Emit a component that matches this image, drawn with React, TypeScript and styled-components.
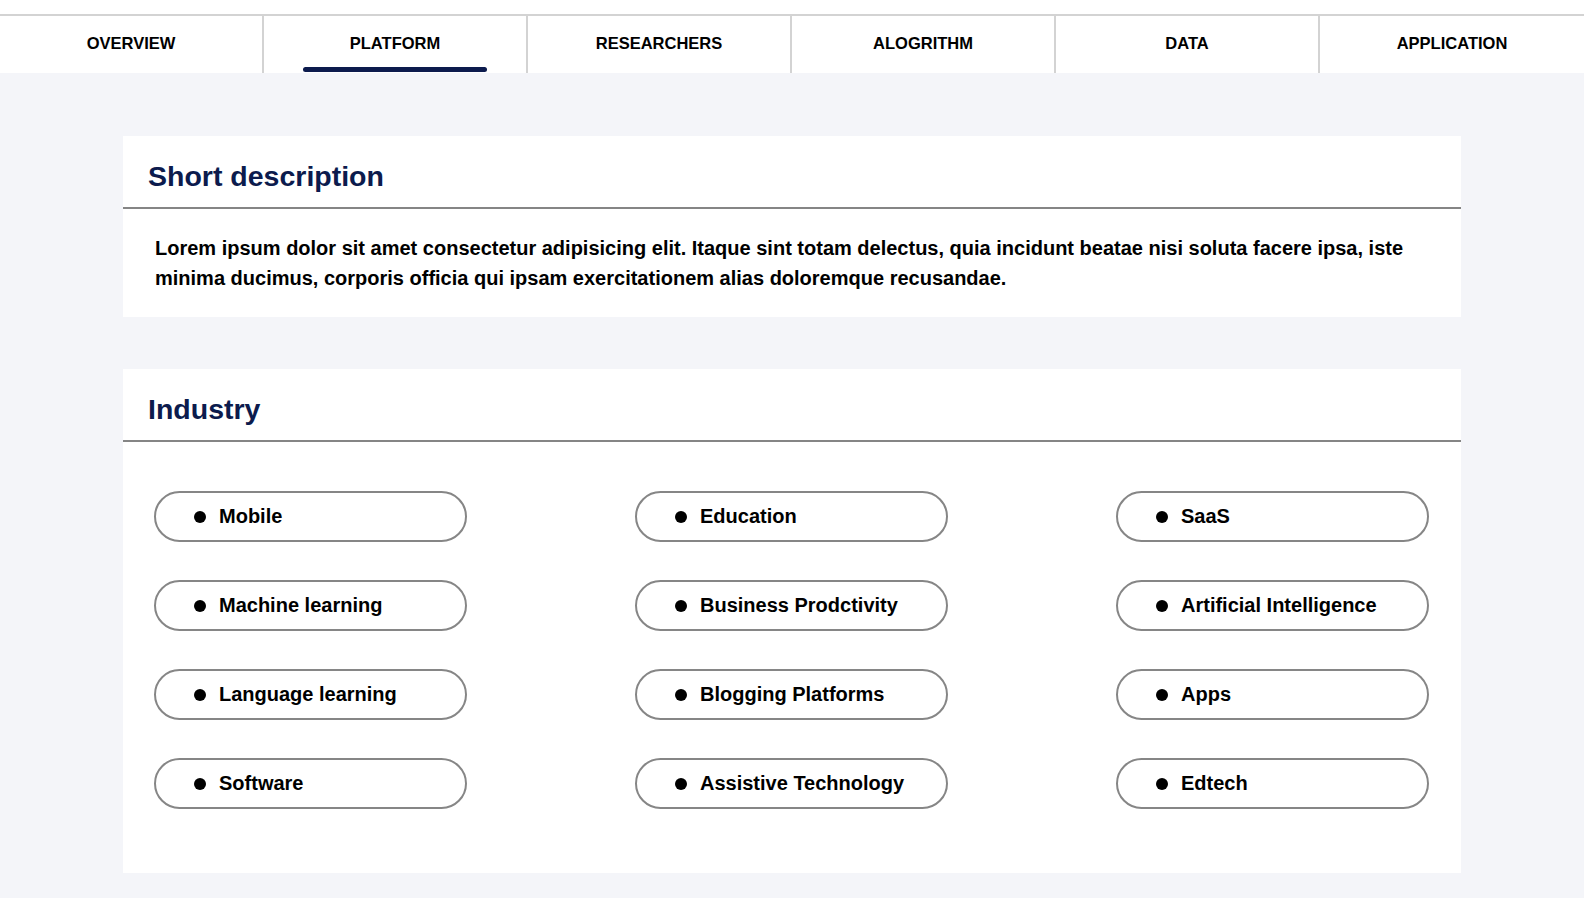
import React from "react";
import styled, { createGlobalStyle } from "styled-components";

const GlobalStyle = createGlobalStyle`
  body {
    margin: 0;
    background: #f4f5f9;
    font-family: "Liberation Sans", Arial, sans-serif;
    color: #000;
  }
`;

const tabs = ["Overview", "Platform", "Researchers", "Alogrithm", "Data", "Application"];

const industries = [
  "Mobile",
  "Education",
  "SaaS",
  "Machine learning",
  "Business Prodctivity",
  "Artificial Intelligence",
  "Language learning",
  "Blogging Platforms",
  "Apps",
  "Software",
  "Assistive Technology",
  "Edtech"
];

const Header = styled.header`
  background: #fff;
  padding-top: 14px;
`;

const TabBar = styled.nav`
  display: grid;
  grid-template-columns: repeat(6, 1fr);
  border-top: 2px solid #d3d3d3;
`;

const Tab = styled.div<{ $active?: boolean }>`
  position: relative;
  height: 57px;
  display: flex;
  align-items: center;
  justify-content: center;
  padding-bottom: 2px;
  box-sizing: border-box;
  border-right: 2px solid #d3d3d3;
  font-size: 16.5px;
  font-weight: 700;
  text-transform: uppercase;
  cursor: pointer;

  &:last-child {
    border-right: none;
  }

  &::after {
    content: "";
    display: ${(p) => (p.$active ? "block" : "none")};
    position: absolute;
    bottom: 1px;
    left: 50%;
    transform: translateX(-50%);
    width: 184px;
    height: 5px;
    border-radius: 3px;
    background: #0c1b4d;
  }
`;

const Main = styled.main`
  display: flex;
  flex-direction: column;
  gap: 52px;
  padding: 63px 0 24px;
`;

const Card = styled.section`
  width: 1338px;
  margin: 0 auto;
  background: #fff;
`;

const CardTitle = styled.h2`
  margin: 0;
  padding: 24px 25px 14px;
  font-size: 28.5px;
  font-weight: 700;
  color: #0c1b4d;
  border-bottom: 2px solid #858585;
`;

const Description = styled.p`
  margin: 0;
  padding: 24px 32px 24px;
  font-size: 20px;
  font-weight: 700;
  line-height: 30px;
`;

const PillGrid = styled.div`
  display: grid;
  grid-template-columns: repeat(3, 313px);
  justify-content: space-between;
  row-gap: 38px;
  padding: 49px 32px 64px 31px;
`;

const Pill = styled.div`
  height: 51px;
  box-sizing: border-box;
  border: 2px solid #868686;
  border-radius: 26px;
  display: flex;
  align-items: center;
  padding-left: 38px;
  font-size: 20px;
  font-weight: 700;
`;

const Dot = styled.span`
  width: 12px;
  height: 12px;
  border-radius: 50%;
  background: #000;
  margin-right: 13px;
  flex-shrink: 0;
`;

export default function App() {
  return (
    <>
      <GlobalStyle />
      <Header>
        <TabBar>
          {tabs.map((t) => (
            <Tab key={t} $active={t === "Platform"}>
              {t}
            </Tab>
          ))}
        </TabBar>
      </Header>
      <Main>
        <Card>
          <CardTitle>Short description</CardTitle>
          <Description>
            Lorem ipsum dolor sit amet consectetur adipisicing elit. Itaque sint totam delectus,
            quia incidunt beatae nisi soluta facere ipsa, iste minima ducimus, corporis officia qui
            ipsam exercitationem alias doloremque recusandae.
          </Description>
        </Card>
        <Card>
          <CardTitle>Industry</CardTitle>
          <PillGrid>
            {industries.map((name) => (
              <Pill key={name}>
                <Dot />
                {name}
              </Pill>
            ))}
          </PillGrid>
        </Card>
      </Main>
    </>
  );
}
